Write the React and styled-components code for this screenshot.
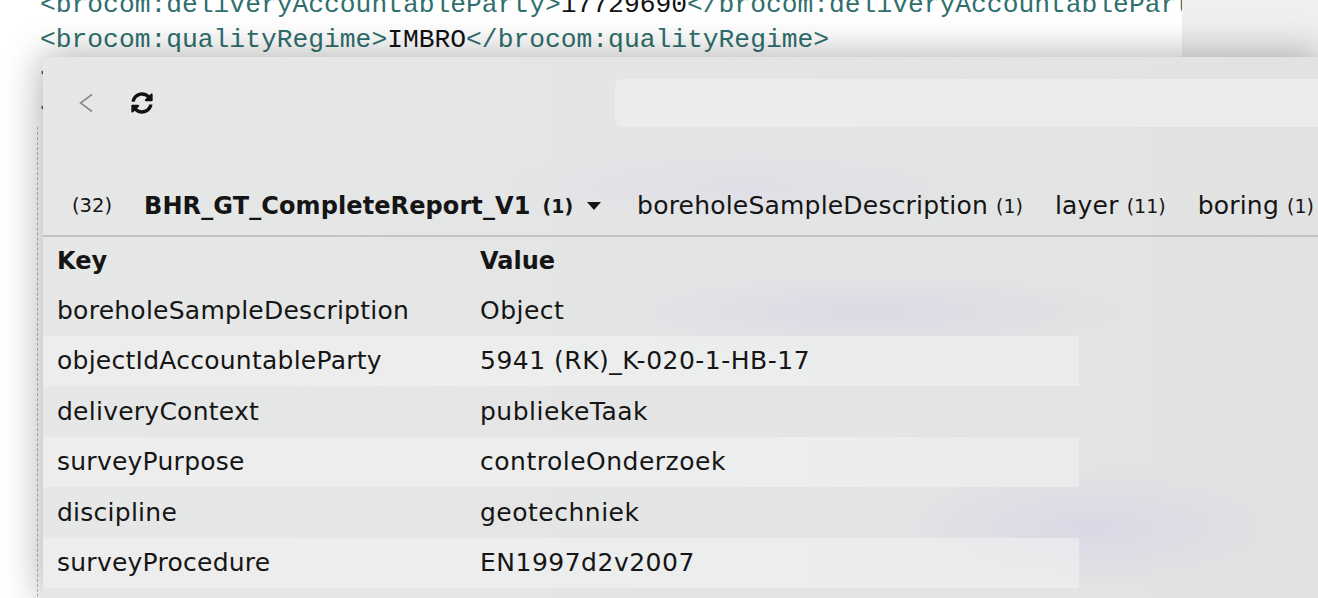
import React from 'react';
import styled, {createGlobalStyle} from 'styled-components';
import {FaSyncAlt} from 'react-icons/fa';

const xmlLines = [
  ['<brocom:deliveryAccountableParty>', '17729690', '</brocom:deliveryAccountableParty>'],
  ['<brocom:qualityRegime>', 'IMBRO', '</brocom:qualityRegime>'],
  ['<brocom:deliveryResponsibleParty>', '17729690', '</brocom:deliveryResponsibleParty>'],
  ['<bhrgtcom:boreholeSampleDescription>', '', ''],
];

const foldedLines = [
  ['<bhrgtcom:descriptionProcedure>', 'NEN5104', '</bhrgtcom:descriptionProcedure>'],
  ['<bhrgtcom:descriptionLocation>', 'veld', '</bhrgtcom:descriptionLocation>'],
  ['<bhrgtcom:result>', '', ''],
  ['<bhrgtcom:layer>', '', ''],
  ['<bhrgtcom:upperBoundary>', '0.00', '</bhrgtcom:upperBoundary>'],
];

const tabs = [
  {name: 'boreholeSampleDescription', count: 1},
  {name: 'layer', count: 11},
  {name: 'boring', count: 1},
];

const rows = [
  ['boreholeSampleDescription', 'Object'],
  ['objectIdAccountableParty', '5941 (RK)_K-020-1-HB-17'],
  ['deliveryContext', 'publiekeTaak'],
  ['surveyPurpose', 'controleOnderzoek'],
  ['discipline', 'geotechniek'],
  ['surveyProcedure', 'EN1997d2v2007'],
  ['reportDate', '2018-05-07'],
];

const XmlLine = ({line}) => (
  <Line>
    {line[0]}<Plain>{line[1]}</Plain>{line[2]}
  </Line>
);

const App = () => {
  return (
    <Page>
      <GlobalStyle />
      <Document>
        <XmlPane>
          <Lines>
            {xmlLines.map((l, i) => <XmlLine key={i} line={l} />)}
            <FoldGuide>
              {foldedLines.map((l, i) => <XmlLine key={i} line={l} />)}
            </FoldGuide>
          </Lines>
        </XmlPane>
        <SidePane />
      </Document>

      <Panel>
        <NavBar>
          <BackButton>
            <svg width="16" height="22" viewBox="0 0 16 22">
              <polyline points="14,2.5 2.5,11 14,19.5" fill="none" stroke="#8a8a8a" strokeWidth="1.6" />
            </svg>
          </BackButton>
          <ReloadButton>
            <FaSyncAlt size={22} />
          </ReloadButton>
          <AddressBar />
        </NavBar>

        <TabBar>
          <Total>(32)</Total>
          <Tab $active>
            BHR_GT_CompleteReport_V1<Count $bold>(1)</Count>
            <Caret />
          </Tab>
          {tabs.map(t => (
            <Tab key={t.name}>
              {t.name}<Count>({t.count})</Count>
            </Tab>
          ))}
        </TabBar>

        <Table>
          <thead>
            <tr>
              <HeadCell>Key</HeadCell>
              <HeadCell>Value</HeadCell>
            </tr>
          </thead>
          <tbody>
            {rows.map(r => (
              <Row key={r[0]}>
                <KeyCell>{r[0]}</KeyCell>
                <ValueCell>{r[1]}</ValueCell>
              </Row>
            ))}
          </tbody>
        </Table>
      </Panel>
    </Page>
  );
};

const GlobalStyle = createGlobalStyle`
  html, body {
    margin: 0;
    padding: 0;
  }
  body {
    background: #fff;
    font-family: "DejaVu Sans", sans-serif;
  }
`;

const Page = styled.div`
  position: relative;
  width: 1318px;
  height: 598px;
  overflow: hidden;
`;

const Document = styled.div`
  display: flex;
  height: 598px;
`;

const XmlPane = styled.div`
  width: 1182px;
  background: #fff;
  overflow: hidden;
`;

const SidePane = styled.div`
  flex: 1;
  background: #efefef;
`;

const Lines = styled.div`
  margin-top: -12px;
  padding-left: 40px;
  font-family: "Liberation Mono", monospace;
  font-size: 26.3px;
  line-height: 34.5px;
  white-space: pre;
  color: #2f6f6d;
`;

const Line = styled.div``;

const Plain = styled.span`
  color: #111;
`;

const FoldGuide = styled.div`
  margin-left: -3px;
  margin-top: 1px;
  padding-left: 40px;
  border-left: 1px dashed #b5b5b5;
  height: 500px;
`;

const Panel = styled.div`
  position: absolute;
  left: 43px;
  top: 57px;
  right: 0;
  bottom: 0;
  border-top-left-radius: 12px;
  background:
    radial-gradient(ellipse 260px 40px at 820px 255px, rgba(214, 208, 230, 0.55), transparent),
    radial-gradient(ellipse 200px 60px at 1050px 470px, rgba(214, 208, 232, 0.6), transparent),
    radial-gradient(ellipse 240px 40px at 700px 130px, rgba(220, 216, 232, 0.5), transparent),
    linear-gradient(90deg, #e6e7e7 0%, #e3e5e5 60%, #e2e2e2 100%);
  box-shadow: 0 0 38px 2px rgba(0, 0, 0, 0.32);
  color: #151515;
`;

const NavBar = styled.div`
  display: flex;
  align-items: center;
  height: 48px;
  margin-top: 22px;
  padding-left: 35px;
`;

const BackButton = styled.div`
  display: flex;
  width: 16px;
  height: 22px;
`;

const ReloadButton = styled.div`
  display: flex;
  margin-left: 37px;
  color: #111;
`;

const AddressBar = styled.div`
  flex: 1;
  height: 48px;
  margin-left: 462px;
  border-radius: 8px 0 0 8px;
  background: #ececec;
`;

const TabBar = styled.div`
  display: flex;
  align-items: center;
  gap: 32px;
  height: 59px;
  margin-top: 49px;
  padding-left: 29px;
  border-bottom: 2px solid #c3c3c3;
  font-size: 25px;
  white-space: nowrap;
  overflow: hidden;
`;

const Total = styled.span`
  font-size: 19.5px;
`;

const Tab = styled.div`
  display: flex;
  align-items: center;
  font-weight: ${p => (p.$active ? 700 : 400)};
  font-size: ${p => (p.$active ? '24px' : '25px')};
  letter-spacing: ${p => (p.$active ? '0.1px' : '0.2px')};
`;

const Count = styled.span`
  margin-left: ${p => (p.$bold ? '12px' : '8px')};
  font-size: 19px;
  font-weight: ${p => (p.$bold ? 700 : 400)};
  letter-spacing: 0;
`;

const Caret = styled.span`
  margin-left: 14px;
  margin-right: 4px;
  width: 0;
  height: 0;
  border-left: 7px solid transparent;
  border-right: 7px solid transparent;
  border-top: 8px solid #151515;
`;

const Table = styled.table`
  width: 1036px;
  border-collapse: collapse;
`;

const HeadCell = styled.th`
  height: 48px;
  padding: 0 0 0 14px;
  text-align: left;
  font-size: 24px;
  font-weight: 700;
  &:last-child {
    padding-left: 0;
  }
`;

const Row = styled.tr`
  height: 50.5px;
  &:nth-child(even) {
    background: rgba(242, 242, 242, 0.6);
  }
`;

const KeyCell = styled.td`
  width: 423px;
  padding: 0 0 0 14px;
  font-size: 25px;
  letter-spacing: 0.25px;
  white-space: nowrap;
`;

const ValueCell = styled.td`
  padding: 0;
  font-size: 25px;
  letter-spacing: 0.5px;
  white-space: nowrap;
`;

export default App;
